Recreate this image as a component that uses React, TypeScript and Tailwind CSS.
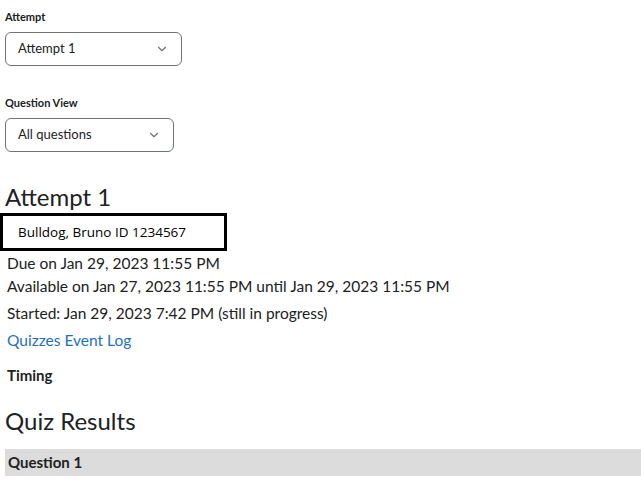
import { ChevronDown } from "lucide-react";

function Select({ label, value, width }: { label: string; value: string; width: string }) {
  return (
    <div>
      <p className="text-[11px] font-bold text-[#202122] leading-none">{label}</p>
      <div
        className={`mt-[10px] ${width} h-[34px] border border-[#6e7376] rounded-[6px] flex items-center justify-between pl-[12px] pr-[12px] bg-white`}
      >
        <span className="text-[13px] text-[#202122]">{value}</span>
        <ChevronDown size={14} strokeWidth={2} className="text-[#6e7376]" />
      </div>
    </div>
  );
}

export default function App() {
  return (
    <div className="min-h-screen bg-white font-['Lato',sans-serif] text-[#202122] overflow-hidden">
      <div className="pt-[11px] pl-[5px]">
        <Select label="Attempt" value="Attempt 1" width="w-[177px]" />
        <div className="mt-[31px]">
          <Select label="Question View" value="All questions" width="w-[169px]" />
        </div>
      </div>

      <h1 className="mt-[30px] pl-[5px] text-[24px] leading-[30px] font-normal text-[#202122]">
        Attempt 1
      </h1>

      <div className="mt-[1px] w-[227px] h-[38px] border-[3px] border-black flex items-center pl-[15px]">
        <span className="font-['Open_Sans',sans-serif] text-[13.5px] text-black">
          Bulldog, Bruno ID 1234567
        </span>
      </div>

      <div className="pl-[7px] text-[15.5px] leading-[23px] mt-[1px]">
        <p>Due on Jan 29, 2023 11:55 PM</p>
        <p>Available on Jan 27, 2023 11:55 PM until Jan 29, 2023 11:55 PM</p>
        <p className="mt-[4px]">Started: Jan 29, 2023 7:42 PM (still in progress)</p>
        <p className="mt-[4px] text-[#1e6fc0]">Quizzes Event Log</p>
        <p className="mt-[12px] font-bold text-[15px]">Timing</p>
      </div>

      <h2 className="mt-[19px] pl-[5px] text-[24px] leading-[30px] font-normal">Quiz Results</h2>

      <div className="mt-[13px] ml-[5px] h-[27px] bg-[#dcdcdc] flex items-center pl-[3px]">
        <span className="font-bold text-[15px]">Question 1</span>
      </div>
    </div>
  );
}
